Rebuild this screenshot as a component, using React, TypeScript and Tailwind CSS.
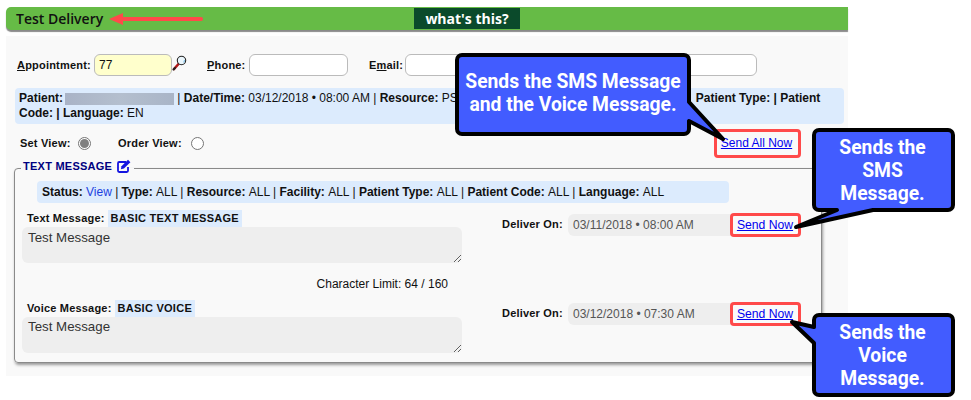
const labelCls = "font-bold text-[11px] tracking-[0.2px] text-[#111]";

const Label = ({ pre, u, post, className = "" }: { pre?: string; u: string; post: string; className?: string }) => (
  <span className={`${labelCls} ${className}`}>
    {pre}
    <span className="underline">{u}</span>
    {post}
  </span>
);

const Magnifier = () => (
  <svg width="15" height="16" viewBox="0 0 15 16" className="shrink-0 -mt-[4px]">
    <line x1="2" y1="14" x2="6.5" y2="9" stroke="#b01818" strokeWidth="2.6" strokeLinecap="round" />
    <line x1="1.5" y1="14.5" x2="3" y2="13" stroke="#222" strokeWidth="2" strokeLinecap="round" />
    <circle cx="9.5" cy="5.5" r="4.2" fill="#eaf6fc" stroke="#222" strokeWidth="1.1" />
    <path d="M11.5 7.5 a3 3 0 0 0 1 -2.5" fill="none" stroke="#8cc4e4" strokeWidth="1.2" />
  </svg>
);

const EditIcon = () => (
  <svg width="15" height="14" viewBox="0 0 15 14" className="shrink-0">
    <path d="M9 3H2.2A1.2 1.2 0 0 0 1 4.2v7.6A1.2 1.2 0 0 0 2.2 13h7.6a1.2 1.2 0 0 0 1.2-1.2V8" fill="none" stroke="#1414e0" strokeWidth="1.8" />
    <path d="M4.5 7.2 11 .8l2.4 2.4-6.5 6.4-3 .6z" fill="#1414e0" />
  </svg>
);

const Radio = ({ checked }: { checked?: boolean }) => (
  <span className="w-[13px] h-[13px] rounded-full border border-[#767676] bg-white flex items-center justify-center shrink-0">
    {checked && <span className="w-[9px] h-[9px] rounded-full bg-[#808080]" />}
  </span>
);

const MessageBlock = ({ label, chip, areaCls }: { label: string; chip: string; areaCls: string }) => (
  <div className="w-[440px]">
    <div className="flex items-center h-[17px] pl-[5px]">
      <span className={`${labelCls} pt-[1px]`}>{label}</span>
      <span className="ml-[3px] h-[17px] px-[3px] pt-[1px] bg-[#dcebfd] font-bold text-[11px] tracking-[0.27px] text-[#111] flex items-center">{chip}</span>
    </div>
    <textarea
      readOnly
      defaultValue="Test Message"
      className={`block w-[440px] h-[36px] bg-[#eeeeee] rounded-[6px] pl-[6px] text-[13.3px] leading-[15px] text-[#333] outline-none ${areaCls}`}
    />
  </div>
);

const DeliverRow = ({ value }: { value: string }) => (
  <div className="flex items-center ml-[40px]">
    <span className={`${labelCls} w-[66px]`}>Deliver On:</span>
    <span className="w-[170px] h-[22px] bg-[#eeeeee] rounded-l-[6px] pl-[5px] flex items-center text-[12px] text-[#555]">{value}</span>
    <span className="-ml-[8px] w-[71px] h-[24px] border-[3px] border-[#ff4a4a] rounded-[4px] bg-[#fafafa] flex items-center justify-center pr-[1px] pt-[1px]">
      <a className="text-[12.2px] text-[#0000ee] underline">Send Now</a>
    </span>
  </div>
);

const Callout = ({ d, box, lines }: { d: string; box: string; lines: string[] }) => (
  <>
    <svg width="971" height="400" className="absolute left-0 top-0 pointer-events-none">
      <path d={d} fill="#425cff" stroke="#000" strokeWidth="4" strokeLinejoin="round" />
    </svg>
    <div className={`absolute flex flex-col items-center justify-center text-white font-bold text-[19.3px] leading-[23px] font-['Roboto',sans-serif] ${box}`}>
      {lines.map((l) => (
        <span key={l}>{l}</span>
      ))}
    </div>
  </>
);

export default function App() {
  return (
    <div className="relative w-[971px] h-[400px] overflow-hidden bg-white font-['Liberation_Sans',Arial,sans-serif] text-[#111] pt-[7px] pl-[6px]">
      <div className="w-[842px] h-[23px] bg-[#66bb46] rounded-l-[5px] shadow-[0_2px_1px_#8a8a8a] flex items-center">
        <span className="w-[408px] pl-[10px] font-['Open_Sans',sans-serif] font-semibold text-[14px] text-[#111]">Test Delivery</span>
        <span className="w-[106px] h-[21px] bg-[#0b4a2b] text-white font-['Open_Sans',sans-serif] font-bold text-[14px] flex items-center justify-center">what's this?</span>
      </div>

      <div className="w-[842px] h-[340px] mt-[6px] bg-[#f9f9f9] pt-[18px]">
        <div className="flex items-center h-[22px] pl-[11px]">
          <Label u="A" post="ppointment:" className="w-[77px]" />
          <input readOnly defaultValue="77" className="w-[78px] h-[22px] bg-[#ffffcc] border border-[#bbb] rounded-[6px] pl-[4px] text-[12px] outline-none" />
          <Magnifier />
          <Label u="P" post="hone:" className="ml-[20px] w-[42px]" />
          <input readOnly className="w-[99px] h-[22px] bg-white border border-[#bbb] rounded-[6px]" />
          <Label pre="E" u="m" post="ail:" className="ml-[21px] w-[36px]" />
          <input readOnly className="w-[352px] h-[22px] bg-white border border-[#bbb] rounded-[6px]" />
        </div>

        <div className="ml-[9px] mt-[12px] w-[829px] h-[36px] bg-[#dcebfd] rounded-[4px] px-[4px] pt-[3px] text-[12px] leading-[15px]">
          <b>Patient:</b>
          <span className="inline-block align-top mt-[2px] ml-[2px] w-[109px] h-[12px] bg-gradient-to-r from-[#a9b3c6] via-[#b4bfce] to-[#a9b5c7]" />
          <span> | </span>
          <b>Date/Time: </b>03/12/2018 • 08:00 AM | <b>Resource: </b>PS
          <span className="inline-block w-[238px]" />
          <b>Patient Type: | Patient Code: | Language: </b>EN
        </div>

        <div className="flex items-center h-[30px] mt-[4px] pl-[14px]">
          <span className={`${labelCls} w-[58px]`}>Set View:</span>
          <Radio checked />
          <span className={`${labelCls} ml-[27px] w-[73px]`}>Order View:</span>
          <Radio />
          <span className="ml-auto mr-[47px] w-[87px] h-[29px] border-[3px] border-[#ff4a4a] rounded-[4px] flex items-center justify-center pr-[2px]">
            <a className="text-[12px] text-[#0000ee] underline">Send All Now</a>
          </span>
        </div>

        <fieldset className="ml-[8px] w-[808px] h-[205px] border border-[#8a8a8a] rounded-[4px] shadow-[1px_2px_3px_#999] px-[7px]">
          <legend className="-ml-[1px] px-[2px] pb-[4px] flex items-center gap-[5px] font-bold text-[11px] tracking-[0.25px] text-[#000080]">
            TEXT MESSAGE
            <EditIcon />
          </legend>
          <div className="ml-[15px] mt-[2px] w-[692px] h-[22px] bg-[#dcebfd] rounded-[4px] pl-[5px] flex items-center text-[12px] whitespace-pre">
            <b>Status: </b><span className="text-[#1d3fe0]">View</span> | <b>Type: </b>ALL | <b>Resource: </b>ALL | <b>Facility: </b>ALL | <b>Patient Type: </b>ALL | <b>Patient Code: </b>ALL | <b>Language: </b>ALL
          </div>

          <div className="flex mt-[7px]">
            <MessageBlock label="Text Message:" chip="BASIC TEXT MESSAGE" areaCls="pt-[3px]" />
            <div className="pt-[3px]"><DeliverRow value="03/11/2018 • 08:00 AM" /></div>
          </div>
          <div className="w-[426px] h-[37px] pt-[5px] text-[12px] flex items-center justify-end">Character Limit: 64 / 160</div>
          <div className="flex">
            <MessageBlock label="Voice Message:" chip="BASIC VOICE" areaCls="pt-[2px]" />
            <div className="pt-[2px]"><DeliverRow value="03/12/2018 • 07:30 AM" /></div>
          </div>
        </fieldset>
      </div>

      <svg width="110" height="18" className="absolute left-[105px] top-[10px]">
        <line x1="14" y1="9" x2="96" y2="9" stroke="#ff4a4a" strokeWidth="4" strokeLinecap="round" />
        <path d="M4 9 18 3v12z" fill="#ff4a4a" />
      </svg>

      <Callout
        d="M462 55H684a5 5 0 0 1 5 5V102L723 139L689 121V129a5 5 0 0 1-5 5H462a5 5 0 0 1-5-5V60a5 5 0 0 1 5-5Z"
        box="left-[457px] top-[55px] w-[232px] h-[79px] pb-[3px]"
        lines={["Sends the SMS Message", "and the Voice Message."]}
      />
      <Callout
        d="M819 130H948a5 5 0 0 1 5 5V205a5 5 0 0 1-5 5H873L796 227L837 210H819a5 5 0 0 1-5-5V135a5 5 0 0 1 5-5Z"
        box="left-[814px] top-[130px] w-[139px] h-[80px] pr-[2px]"
        lines={["Sends the", "SMS", "Message."]}
      />
      <Callout
        d="M819 315H948a5 5 0 0 1 5 5V390a5 5 0 0 1-5 5H819a5 5 0 0 1-5-5V343L792 322L814 327V320a5 5 0 0 1 5-5Z"
        box="left-[814px] top-[315px] w-[139px] h-[80px] pr-[2px]"
        lines={["Sends the", "Voice", "Message."]}
      />
    </div>
  );
}
